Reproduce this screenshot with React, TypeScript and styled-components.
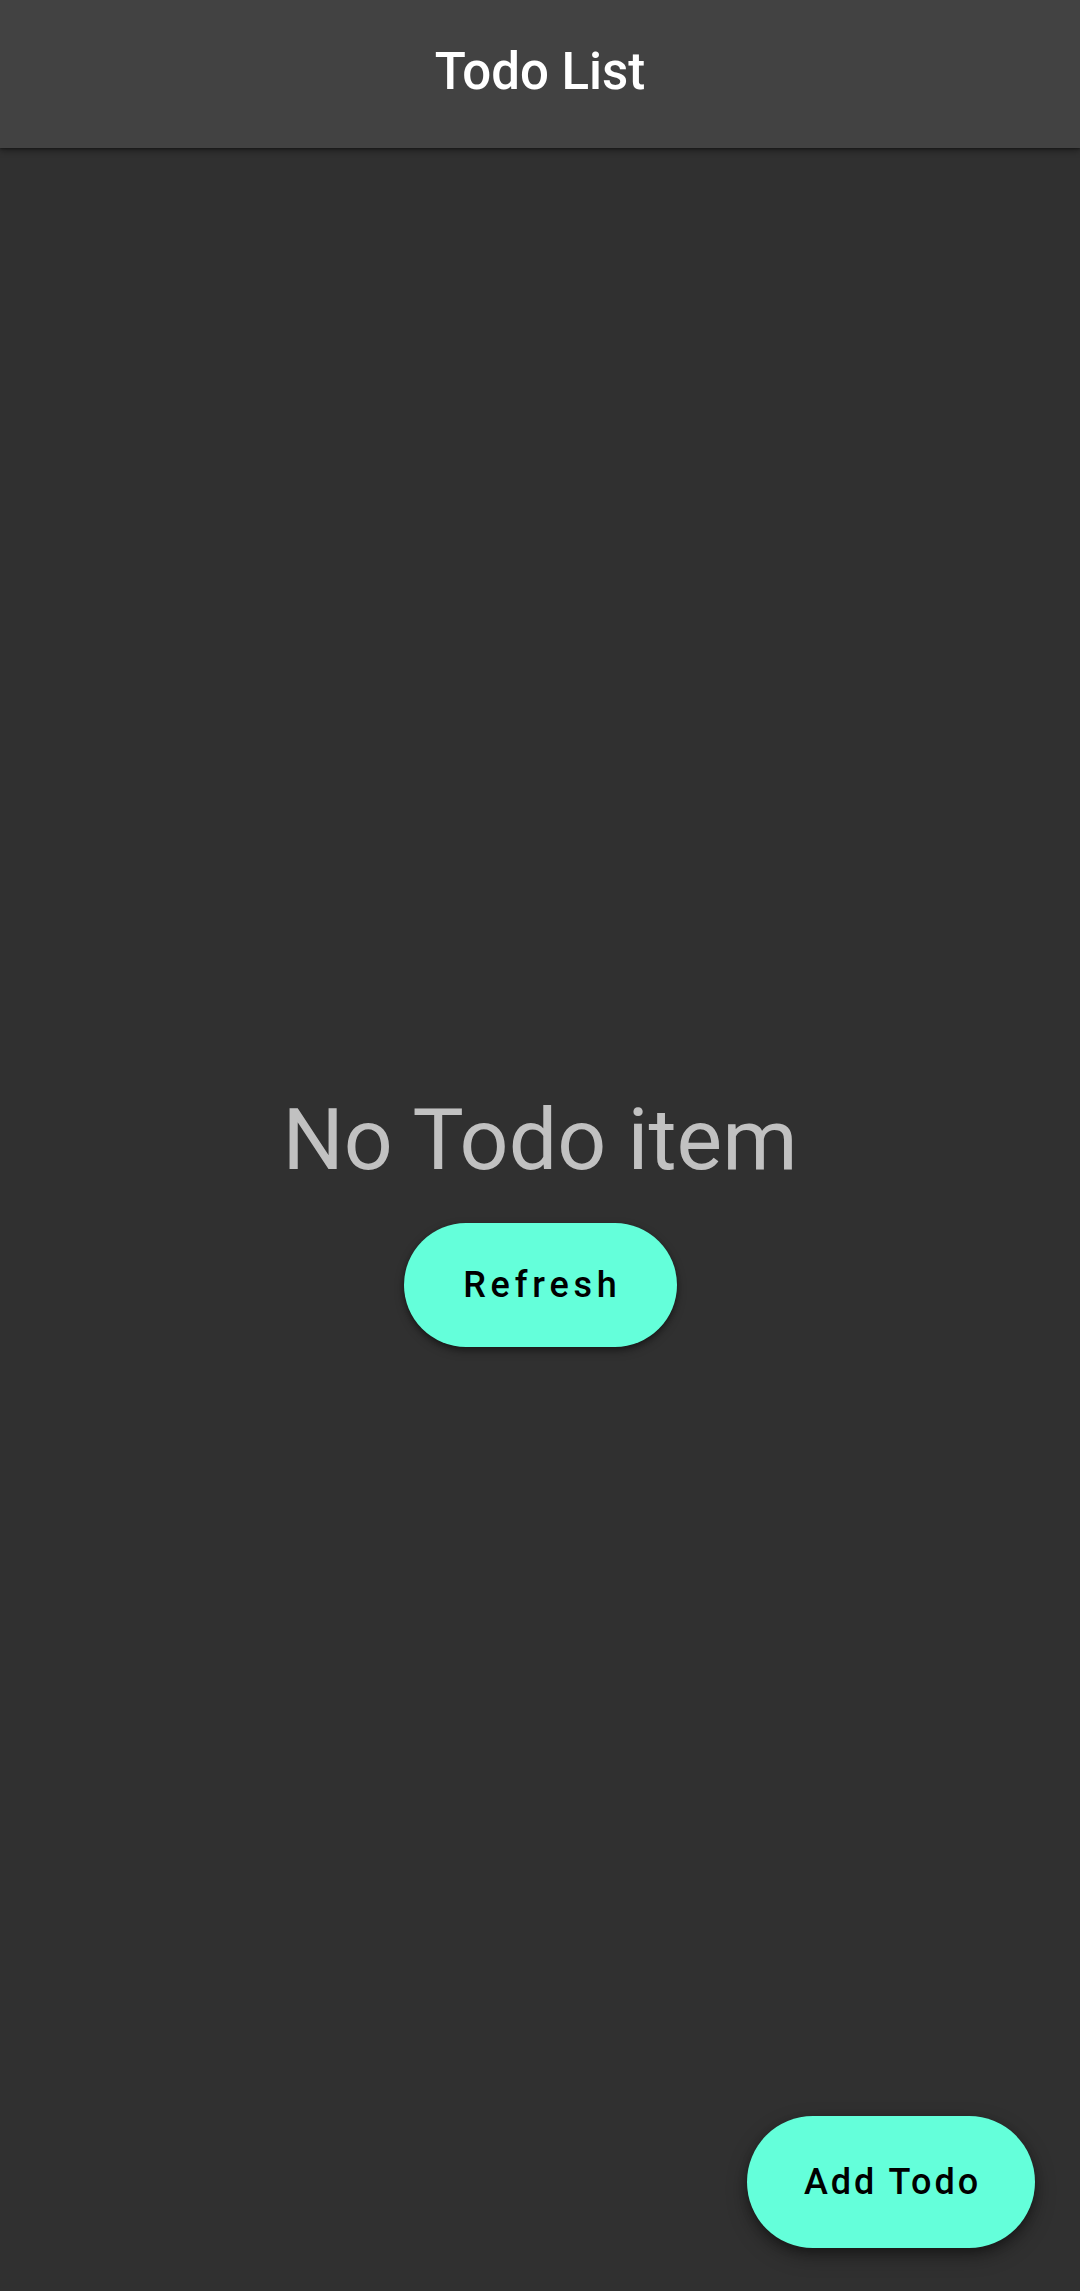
import React from "react";
import styled, { createGlobalStyle } from "styled-components";

const GlobalStyle = createGlobalStyle`
  html, body {
    margin: 0;
    padding: 0;
    background: #303030;
    font-family: Roboto, "Noto Sans", sans-serif;
  }
  #root {
    min-height: 100vh;
  }
`;

const Screen = styled.div`
  display: flex;
  flex-direction: column;
  height: 2291px;
  background: #303030;
  position: relative;
  overflow: hidden;
`;

const AppBar = styled.header`
  position: relative;
  z-index: 2;
  flex: 0 0 148px;
  height: 148px;
  display: flex;
  align-items: center;
  justify-content: center;
  padding-bottom: 6px;
  box-sizing: border-box;
  background: #424242;
  box-shadow: 0 3px 6px rgba(0, 0, 0, 0.35), 0 1px 2px rgba(0, 0, 0, 0.3);
`;

const Title = styled.h1`
  margin: 0;
  font-size: 51px;
  font-weight: 500;
  color: #ffffff;
  letter-spacing: 0;
`;

const Body = styled.main`
  flex: 1;
  display: flex;
  flex-direction: column;
  align-items: center;
  justify-content: center;
`;

const EmptyText = styled.div`
  font-size: 86px;
  line-height: 96px;
  font-weight: 400;
  color: #c1c1c1;
`;

const PillButton = styled.button<{ $w: number; $h: number; $elev: number; $ls: number }>`
  width: ${(p) => p.$w}px;
  height: ${(p) => p.$h}px;
  border: none;
  border-radius: ${(p) => p.$h / 2}px;
  background: #64ffda;
  color: #000000;
  font-family: Roboto, "Noto Sans", sans-serif;
  font-size: 36px;
  font-weight: 500;
  letter-spacing: ${(p) => p.$ls}px;
  padding: 0 0 0 ${(p) => p.$ls}px;
  display: flex;
  align-items: center;
  justify-content: center;
  cursor: pointer;
  box-shadow: 0 ${(p) => p.$elev}px ${(p) => p.$elev * 2.5}px rgba(0, 0, 0, 0.35),
    0 ${(p) => p.$elev / 2}px ${(p) => p.$elev}px rgba(0, 0, 0, 0.25);
`;

const RefreshButton = styled(PillButton)`
  margin-top: 35px;
`;

const Fab = styled(PillButton)`
  position: absolute;
  right: 45px;
  bottom: 43px;
`;

export default function App() {
  return (
    <>
      <GlobalStyle />
      <Screen>
        <AppBar>
          <Title>Todo List</Title>
        </AppBar>
        <Body>
          <EmptyText>No Todo item</EmptyText>
          <RefreshButton $w={273} $h={124} $elev={4} $ls={4.8}>
            Refresh
          </RefreshButton>
        </Body>
        <Fab $w={288} $h={132} $elev={8} $ls={3}>
          Add Todo
        </Fab>
      </Screen>
    </>
  );
}
